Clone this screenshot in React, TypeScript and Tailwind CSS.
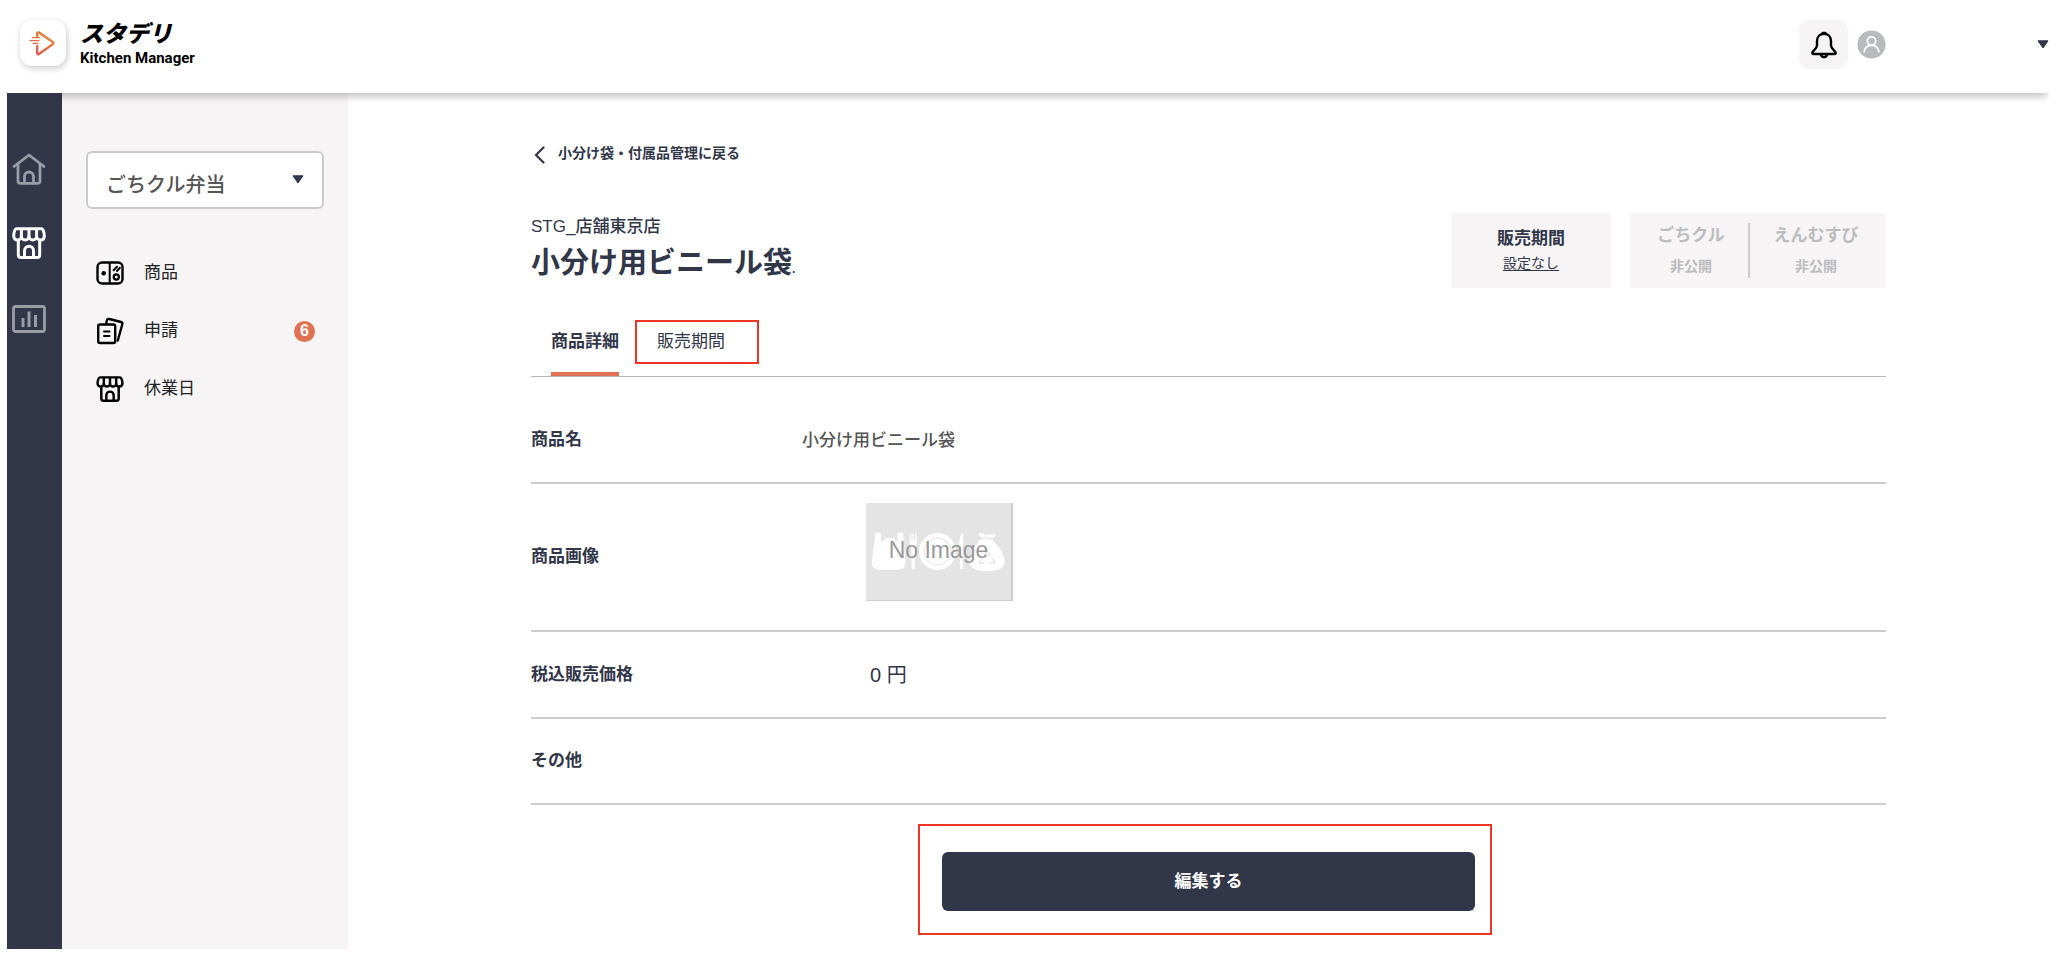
import React from "react";

function BrandMark() {
  return (
    <svg viewBox="0 0 46 46" className="size-[46px]" fill="none" aria-hidden="true">
      <defs>
        <linearGradient id="brand" x1="16" y1="36" x2="30" y2="12" gradientUnits="userSpaceOnUse">
          <stop stopColor="#d9575a" />
          <stop offset="0.5" stopColor="#e2733f" />
          <stop offset="1" stopColor="#e58a35" />
        </linearGradient>
      </defs>
      <g stroke="url(#brand)" strokeLinecap="round" strokeLinejoin="round">
        <path
          strokeWidth="2.4"
          d="M17.200 16.300v-2.800c0-1 1-1.500 1.800-.9l13.700 9.500c.9.6.9 1.500 0 2.100l-13.700 9.800c-.8.600-1.800.1-1.800-.9V26"
        />
        <path strokeWidth="1.200" d="M12.300 17.600h7.700M10 20.600h9M13.300 23.400h4.700" />
      </g>
    </svg>
  );
}

function HomeIcon() {
  return (
    <svg viewBox="0 0 34 32" className="h-8 w-[34px]" fill="none" stroke="currentColor" strokeWidth="2.8" strokeLinecap="round" strokeLinejoin="round" aria-hidden="true">
      <path d="M2 13.500 17 2l15 11.500" />
      <path d="M6 11.500v16.200C6 29.500 7 30.300 8.500 30.300h17c1.500 0 2.500-.8 2.500-2.600V11.500" />
      <path d="M12.500 30v-6.500a4.500 4.500 0 0 1 9 0V30" />
    </svg>
  );
}

function StoreIcon({ className }: { className: string }) {
  return (
    <svg viewBox="0 0 34 32" className={className} fill="none" stroke="currentColor" strokeWidth="3" strokeLinecap="round" strokeLinejoin="round" aria-hidden="true">
      <path d="M4.500 1.700h25c1.500 0 2.800 4 2.800 7.300 0 2.400-1.500 4-3.800 4s-3.900-1.600-3.900-3.500c0 1.900-1.700 3.500-3.800 3.500S17 11.400 17 9.500c0 1.900-1.700 3.500-3.800 3.500s-3.800-1.600-3.800-3.500c0 1.900-1.600 3.500-3.900 3.500s-3.800-1.600-3.800-4c0-3.300 1.300-7.300 2.800-7.300z" />
      <path d="M9.400 9.500V2.500M17 9.500V2.500M24.600 9.500V2.500" />
      <path d="M6.300 13.500v14.200c0 1.700.9 2.700 2.400 2.700h16.600c1.500 0 2.400-1 2.400-2.700V13.500" />
      <path d="M12.500 30v-6.300a4.500 4.500 0 0 1 9 0V30" />
    </svg>
  );
}

function ChartIcon() {
  return (
    <svg viewBox="0 0 34 28" className="h-7 w-[34px]" fill="none" stroke="currentColor" aria-hidden="true">
      <rect x="1.500" y="1.500" width="31" height="25" rx="2" strokeWidth="2.800" />
      <path d="M11 13v9M17 6.500V22M23.500 10v12" strokeWidth="3" />
    </svg>
  );
}

function ProductIcon() {
  return (
    <svg viewBox="0 0 28 24" className="h-6 w-7" fill="none" stroke="currentColor" strokeWidth="2" strokeLinecap="round" aria-hidden="true">
      <rect x="1.500" y="1.500" width="25" height="21" rx="4.500" strokeWidth="2.400" />
      <path d="M13.700 2v20" />
      <circle cx="7.700" cy="12.300" r="2.300" fill="currentColor" stroke="none" />
      <circle cx="20.300" cy="16" r="2.600" strokeWidth="2.200" />
      <path d="m17.600 9.300 3.400-3.600M21 10l2.800-3.200" strokeWidth="2" />
    </svg>
  );
}

function RequestIcon() {
  return (
    <svg viewBox="0 0 28 28" className="size-7" fill="none" stroke="currentColor" strokeWidth="2.400" strokeLinecap="round" strokeLinejoin="round" aria-hidden="true">
      <rect x="2.200" y="7.500" width="17" height="18.500" rx="1.800" />
      <path d="M8 14.500h5.500M8 19h5.500" strokeWidth="2" />
      <path d="M10 7l.9-3.500c.4-1.300 1.200-1.900 2.500-1.500l11.600 3c1.300.4 1.700 1.200 1.300 2.300L21.800 23.500" />
    </svg>
  );
}

function BellIcon() {
  return (
    <svg viewBox="0 0 26 28" className="h-7 w-[26px]" fill="none" stroke="#000" strokeWidth="2.400" strokeLinecap="round" strokeLinejoin="round" aria-hidden="true">
      <path d="M13 2.800c-4.500 0-7 3.300-7 7.500v4.200c0 3.500-4.700 5.500-4.700 7.200 0 .8.600 1.300 1.400 1.300h20.600c.8 0 1.400-.5 1.400-1.300 0-1.700-4.700-3.700-4.700-7.200v-4.200c0-4.200-2.500-7.500-7-7.500zM11.500 2h3" />
      <path d="M9.800 23.500c.5 1.800 1.700 2.700 3.200 2.700s2.700-.9 3.200-2.700" />
    </svg>
  );
}

function Caret() {
  return (
    <svg viewBox="0 0 12 9" className="h-[9px] w-3" aria-hidden="true">
      <path d="M1 .8h10L6 8z" fill="#313649" stroke="#313649" strokeLinejoin="round" />
    </svg>
  );
}

function NoImage() {
  return (
    <div className="relative flex h-[98px] w-[147px] items-center justify-center border-r-2 border-b border-[#cfcfcf] bg-[#e4e4e4]">
      <svg viewBox="0 0 147 98" className="absolute inset-0 size-full" fill="#fff" aria-hidden="true">
        <path d="M9.500 30h5.500v8h4v-2.500h10V38h3v-8h5.500l2.500 29.500c.4 5-2 8-7 8H13c-5 0-7.600-3-7.100-8z" />
        <path d="M45 31h1v7h1.200v-7h1.400v7h1.200v-7H51l.6 9c0 2.500-1.100 3.500-1.900 4V65.500a1.700 1.700 0 0 1-3.600 0V44c-1.100-.5-1.800-1.500-1.800-4z" />
        <circle cx="72.500" cy="49" r="18.800" />
        <circle cx="72.500" cy="49" r="13.500" fill="none" stroke="#ececec" strokeWidth="1.500" />
        <path d="M98 30c-3 3-4.200 11-4.200 20h1.500v15.500a1.600 1.600 0 0 0 3.200 0V30z" />
        <path d="M115 37.500c4-2 10-2 14 0 3 5 11.500 11 11.500 21.500 0 7.500-7 10-17.500 10s-18-2.500-18-10c0-10 7-16.500 10-21.500z" />
        <path d="M114 31c3-2 6 0 7 2 1-2 3-2 4 0 1-2 4-3 6.500-1-1 4-5 4-7 2-1 2-3 2-4 0-2 2-5.500 1-6.500-3z" />
        <path d="m119.500 53 3-5 3.200 5M117 56l-2 4.500h5.500M128 56l2.500 4.500H125" fill="none" stroke="#e4e4e4" strokeWidth="1.300" />
      </svg>
      <span className="relative pb-1 text-[23px] leading-7 text-[#999]">No Image</span>
    </div>
  );
}

const menu = [
  { label: "商品", icon: <ProductIcon /> },
  { label: "申請", icon: <RequestIcon />, count: 6 },
  { label: "休業日", icon: <StoreIcon className="h-[26px] w-7" /> },
];

const labelCell = "w-1/5 text-left align-middle font-bold";

export default function App() {
  return (
    <div className="flex min-h-screen flex-col bg-white pr-[17px] pb-[15px] pl-[7px] font-['Liberation_Sans','Noto_Sans_CJK_JP',sans-serif] text-[17px] leading-6 text-[#313649]">
      <header className="z-10 flex h-[93px] shrink-0 items-start justify-between bg-white pt-5 pl-[13px] shadow-[0_6px_7px_-2px_rgba(0,0,0,0.22)] [clip-path:inset(0_0_-14px_0)]">
        <a href="#" className="flex items-start gap-[14px] text-black">
          <span className="rounded-xl bg-white shadow-[1px_2px_6px_rgba(0,0,0,0.22)]">
            <BrandMark />
          </span>
          <span className="flex flex-col">
            <span className="text-[23px] leading-7 font-black italic">スタデリ</span>
            <span className="pt-px font-[Roboto,sans-serif] text-[15px] leading-[18px] font-bold">Kitchen Manager</span>
          </span>
        </a>
        <div className="flex items-center">
          <button type="button" aria-label="通知" className="flex size-[49px] items-center justify-center rounded-[10px] bg-[#f6f4f5]">
            <BellIcon />
          </button>
          <button type="button" aria-label="アカウント" className="flex items-center pl-[9px]">
            <svg viewBox="0 0 30 30" className="mr-[151px] size-[29px]" fill="none" stroke="#fff" strokeWidth="1.800" strokeLinecap="round" aria-hidden="true">
              <circle cx="15" cy="15" r="14.500" fill="#b9babb" stroke="none" />
              <circle cx="15" cy="11.500" r="4.300" />
              <path d="M7.300 22.500c.8-4 3.900-6.500 7.700-6.500s6.900 2.500 7.700 6.500" />
            </svg>
            <Caret />
          </button>
        </div>
      </header>

      <div className="flex grow">
        <nav aria-label="メイン" className="z-20 flex w-[55px] shrink-0 flex-col gap-[42px] bg-[#313649] pt-[60px] pl-[5px] text-[#9a9ca6]">
          <a href="#" aria-label="ホーム"><HomeIcon /></a>
          <a href="#" aria-label="店舗" className="text-white"><StoreIcon className="h-8 w-[34px]" /></a>
          <a href="#" aria-label="分析" className="pt-1"><ChartIcon /></a>
        </nav>

        <aside className="w-[286px] shrink-0 bg-[#f6f4f5] px-6 pt-[58px]">
          <div className="relative">
            <select aria-label="サービス" className="h-[58px] w-full appearance-none rounded-md border-2 border-[#c9cacb] bg-white pt-2.5 pl-[18px] text-xl font-medium text-[#555]">
              <option>ごちクル弁当</option>
            </select>
            <span className="pointer-events-none absolute top-6 right-5"><Caret /></span>
          </div>
          <ul className="flex flex-col gap-[18px] pt-11 pr-[9px] pl-[10px] text-black">
            {menu.map((item) => (
              <li key={item.label}>
                <a href="#" className="flex h-10 items-center text-[#222]">
                  <span className="mr-5 text-black">{item.icon}</span>
                  <span className="grow">{item.label}</span>
                  {item.count && (
                    <span className="flex size-[21px] items-center justify-center rounded-full bg-[#e07152] text-base leading-5 font-bold text-white">
                      {item.count}
                    </span>
                  )}
                </a>
              </li>
            ))}
          </ul>
        </aside>

        <main className="flex min-w-0 grow flex-col pt-12 pr-[163px] pl-[183px]">
          <a href="#" className="flex items-center gap-[13px] pl-[3px] text-[14px] font-bold">
            <svg viewBox="0 0 11 18" className="mt-1 h-[18px] w-[11px]" fill="none" stroke="currentColor" strokeWidth="2.200" strokeLinecap="round" aria-hidden="true">
              <path d="M9.500 1.500 2 9l7.500 7.500" />
            </svg>
            小分け袋・付属品管理に戻る
          </a>

          <div className="flex items-start justify-between pt-12">
            <div className="pt-0.5">
              <p className="font-medium">STG_店舗東京店</p>
              <h1 className="text-[29px] leading-[48px] font-bold">
                小分け用ビニール袋<span className="text-xs">.</span>
              </h1>
            </div>
            <div className="flex gap-[19px] text-center">
              <div className="flex h-[75px] w-40 flex-col items-center bg-[#f6f4f5] pt-[14px]">
                <span className="font-bold">販売期間</span>
                <a href="#" className="text-[14px] underline underline-offset-2">設定なし</a>
              </div>
              <div className="flex h-[75px] w-64 bg-[#f6f4f5] py-[10px] font-bold text-[#bbbcbd]">
                <div className="w-[120px] border-r-2 border-[#cbcccd] pt-px pl-1">
                  <p>ごちクル</p>
                  <p className="pt-1.5 text-[14px]">非公開</p>
                </div>
                <div className="grow pt-px pr-1">
                  <p>えんむすび</p>
                  <p className="pt-1.5 text-[14px]">非公開</p>
                </div>
              </div>
            </div>
          </div>

          <div role="tablist" className="mt-[31px] flex items-end gap-[38px] border-b border-[#b9b9b9] pl-5">
            <button type="button" role="tab" aria-selected="true" className="h-[57px] border-b-4 border-[#e07152] pb-2 font-bold">
              商品詳細
            </button>
            <button type="button" role="tab" aria-selected="false" className="relative h-[57px] pb-3">
              販売期間
              <span className="pointer-events-none absolute top-px -right-[34px] left-[-22px] h-11 border-2 border-[#ee3524]" />
            </button>
          </div>

          <table className="w-full border-collapse">
            <tbody className="[&>tr]:border-b-2 [&>tr]:border-[#cccdce]">
              <tr className="h-[106px]">
                <th scope="row" className={labelCell + " pt-[20px]"}>商品名</th>
                <td className="pt-[22px] font-medium text-[#555]">小分け用ビニール袋</td>
              </tr>
              <tr className="h-[148px]">
                <th scope="row" className={labelCell}>商品画像</th>
                <td className="pb-[10px] pl-16"><NoImage /></td>
              </tr>
              <tr className="h-[87px]">
                <th scope="row" className={labelCell}>税込販売価格</th>
                <td className="pl-[68px] text-xl">0 円</td>
              </tr>
              <tr className="h-[86px]">
                <th scope="row" className={labelCell}>その他</th>
                <td />
              </tr>
            </tbody>
          </table>

          <div className="relative mt-[47px] w-[533px] self-center">
            <button type="button" className="h-[59px] w-full rounded-md bg-[#313649] font-bold text-white">
              編集する
            </button>
            <span className="pointer-events-none absolute -top-7 -right-[17px] -bottom-6 -left-6 border-2 border-[#ee3524]" />
          </div>
        </main>
      </div>
    </div>
  );
}
